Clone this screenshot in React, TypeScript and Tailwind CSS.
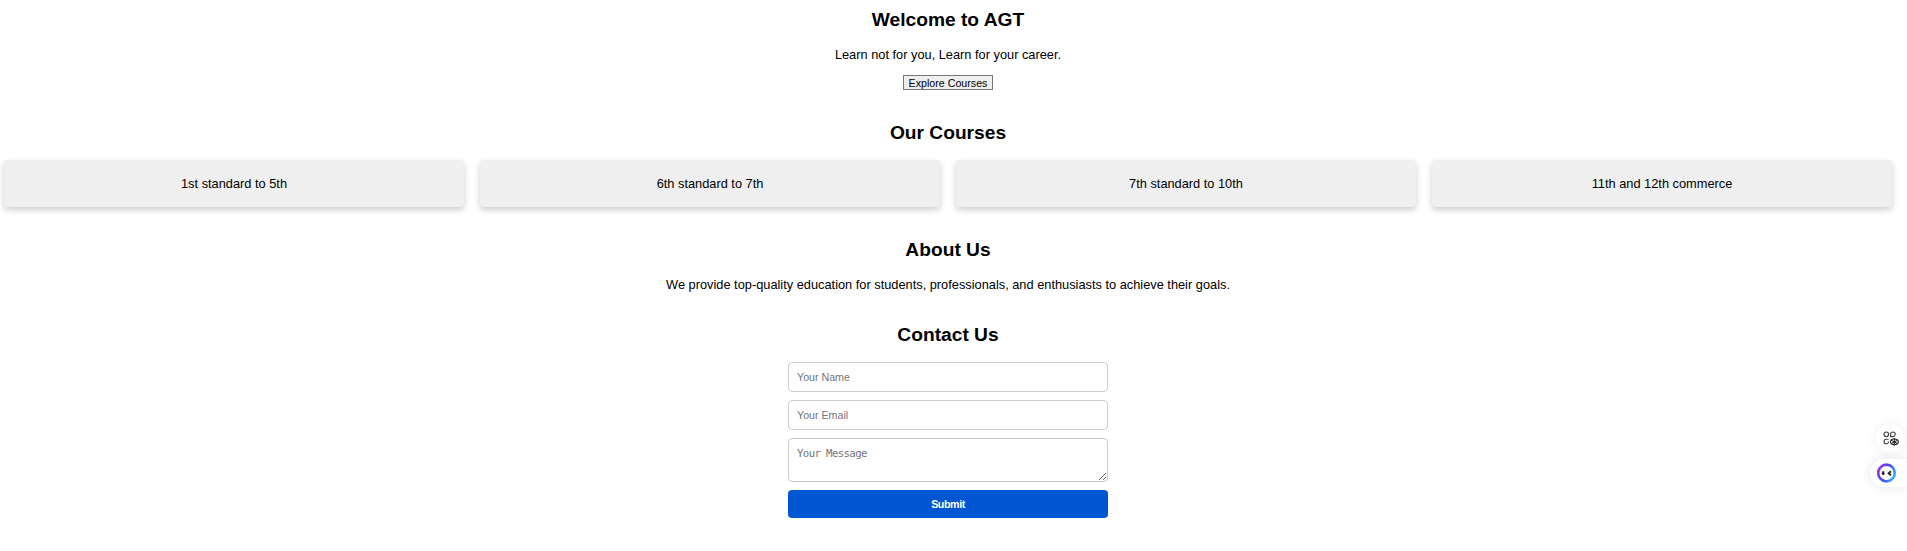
import React from "react";

const courses = ["1st standard to 5th", "6th standard to 7th", "7th standard to 10th", "11th and 12th commerce"];

function Heading({ children }: { children: React.ReactNode }) {
  return <h2 className="h-[22px] text-[19.2px] leading-[22px] font-bold">{children}</h2>;
}

const field =
  "block w-full rounded-[4px] border border-[#ccc] bg-white px-2 text-[10.667px] placeholder:text-[#757575] outline-none";

export default function App() {
  return (
    <div className="relative h-[551px] w-full overflow-hidden bg-white pr-[11px] text-center font-['Liberation_Sans',Arial,sans-serif] text-[12.8px] leading-[15px] text-black">
      <section className="flex flex-col items-center pt-[9px]">
        <Heading>Welcome to AGT</Heading>
        <p className="mt-4">Learn not for you, Learn for your career.</p>
        <button className="mt-[13px] h-[15px] w-[90px] border border-[#767676] bg-[#efefef] text-[10.667px] leading-[14px] whitespace-nowrap">
          Explore Courses
        </button>
      </section>

      <section className="pt-8">
        <Heading>Our Courses</Heading>
        <div className="mt-4 grid grid-cols-4 gap-4 px-1">
          {courses.map((c) => (
            <div
              key={c}
              className="h-[47px] rounded-[4px] bg-[#efefef] pt-4 shadow-[0_3px_6px_rgba(0,0,0,0.2)]"
            >
              {c}
            </div>
          ))}
        </div>
      </section>

      <section className="pt-8">
        <Heading>About Us</Heading>
        <p className="mt-4">
          We provide top-quality education for students, professionals, and enthusiasts to achieve their goals.
        </p>
      </section>

      <section className="flex flex-col items-center pt-8">
        <Heading>Contact Us</Heading>
        <form className="mt-4 flex w-[320px] flex-col gap-2" onSubmit={(e) => e.preventDefault()}>
          <input className={`${field} h-[30px]`} placeholder="Your Name" />
          <input className={`${field} h-[30px]`} placeholder="Your Email" />
          <textarea
            className={`${field} h-[44px] resize pt-2 font-['DejaVu_Sans_Mono',monospace] leading-[13px] tracking-[-0.6px]`}
            placeholder="Your Message"
          />
          <button className="h-[28px] rounded-[4px] bg-[#0056d2] text-[10.667px] font-bold tracking-[-0.4px] text-white">
            Submit
          </button>
        </form>
      </section>

      <div className="absolute top-[424px] right-[2px] flex size-[29px] items-center justify-center rounded-full bg-white shadow-[0_0_12px_rgba(0,0,0,0.07)]">
        <svg width="16" height="15" viewBox="0 0 16 15" fill="none" stroke="#444" strokeWidth="1.1">
          <circle cx="3.3" cy="3.3" r="2.3" />
          <path d="M7.6 5.6V3.3a2.3 2.3 0 1 1 2.3 2.3zM5.6 8.2H3.3a2.3 2.3 0 1 0 2.3 2.3" />
          <path d="M11.4 7v7.6M8 9.1l6.8 3.6M14.8 9.1L8 12.7" strokeWidth="1" stroke="#222" />
          <ellipse cx="11.4" cy="10.8" rx="3.9" ry="2.8" strokeWidth="1.1" stroke="#222" />
        </svg>
      </div>
      <div className="absolute top-[459px] right-0 flex h-[28px] w-[37px] items-center rounded-l-full bg-white pl-[7px] shadow-[0_0_12px_rgba(0,0,0,0.1)]">
        <svg width="20" height="20" viewBox="0 0 20 20">
          <defs>
            <linearGradient id="ring" x1="0" y1="0.35" x2="1" y2="0.8">
              <stop offset="0" stopColor="#9b35ee" />
              <stop offset="0.45" stopColor="#4745f2" />
              <stop offset="1" stopColor="#38b8f8" />
            </linearGradient>
          </defs>
          <circle cx="9.5" cy="10" r="8.3" fill="white" stroke="url(#ring)" strokeWidth="2.7" />
          <ellipse cx="6.2" cy="10.2" rx="1.3" ry="2.1" fill="#222" />
          <path d="M14 8.2l-2.4 2 2.4 2" fill="none" stroke="#222" strokeWidth="1.8" />
        </svg>
      </div>
    </div>
  );
}
